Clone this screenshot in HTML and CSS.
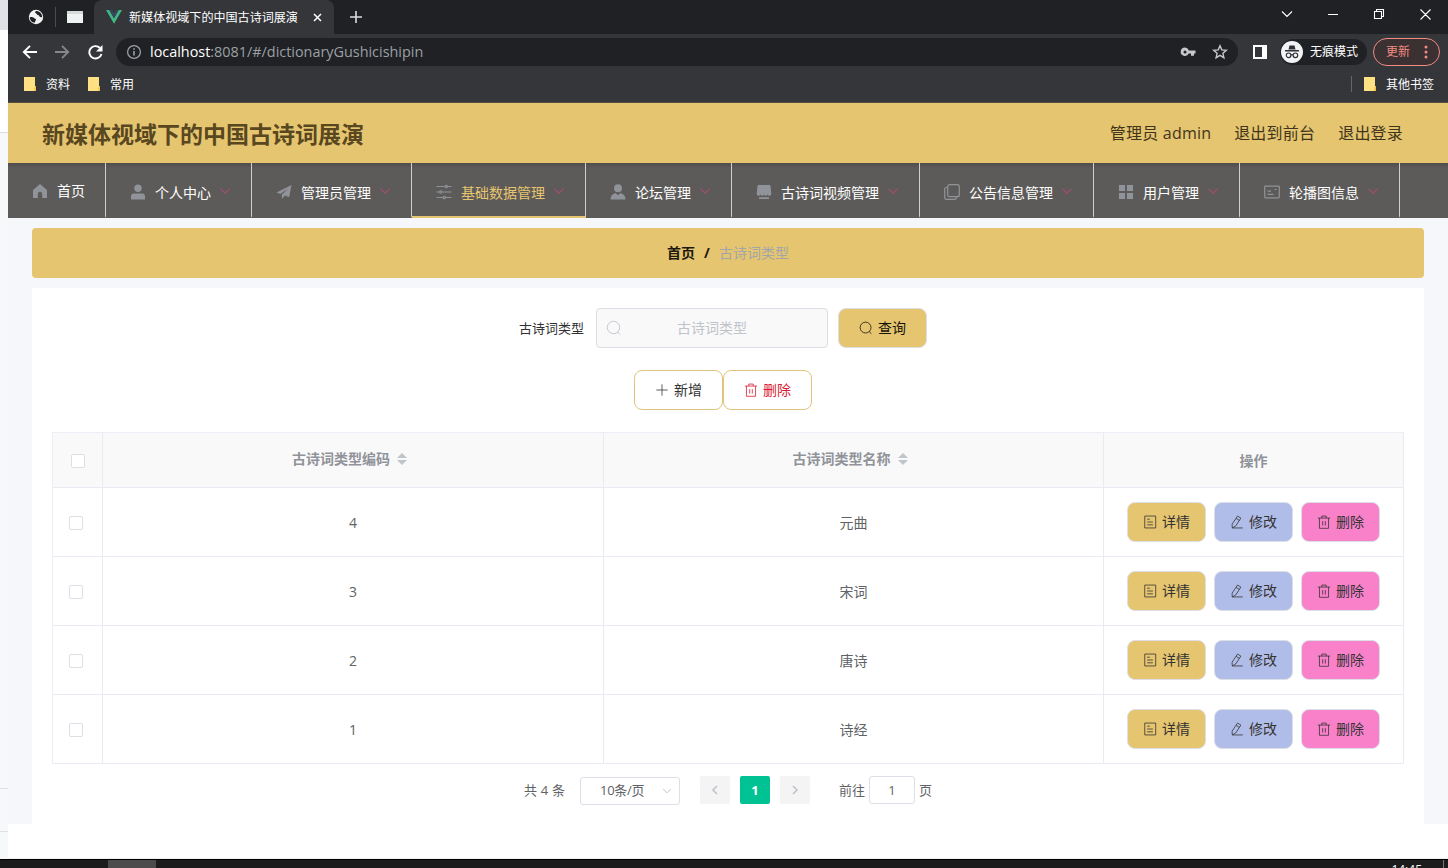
FILE: index.html
```html
<!DOCTYPE html>
<html lang="zh-CN">
<head>
<meta charset="utf-8">
<title>新媒体视域下的中国古诗词展演</title>
<link rel="stylesheet" href="styles.css">
</head>
<body>
<svg class="defs" width="0" height="0">
  <symbol id="search" viewBox="0 0 16 16"><circle cx="7.500" cy="7.500" r="6.200"/><path d="M11.600 12l2.600 2.600"/></symbol>
  <symbol id="plus" viewBox="0 0 16 16"><path d="M8 1.500v13M1.500 8h13"/></symbol>
  <symbol id="trash" viewBox="0 0 16 16"><path d="M1 3.500h14M2.800 3.500v11.700h10.400V3.500M5.500 3.500V1.200h5v2.300M6.500 7v5M9.500 7v5"/></symbol>
  <symbol id="doc" viewBox="0 0 16 16"><path d="M2 1.200h12.500v13.600H2zM4.800 4.800h3M4.800 8h6.500M4.800 11.200h6.500"/></symbol>
  <symbol id="edit" viewBox="0 0 16 16"><path d="M8.600 1.200l3.800 2.300-5.800 9-4 2.300-.2-4.300zM7 3.900l3.800 2.300M2.600 14.800h12"/></symbol>
  <symbol id="down" viewBox="0 0 12 12"><path d="M1.500 3.700L6 8.200l4.500-4.500"/></symbol>
  <symbol id="folder" viewBox="0 0 12 14"><path d="M0 0h11v9l1 .5V14H0z" fill="#ffe083"/><path d="M10 14l1-5 1 1v4z" fill="#f2c43d"/></symbol>
</svg>
<div class="screen">
  <div class="behind"><i class="b1"></i><i class="b2"></i><i class="b3"></i><i class="b4"></i><i class="b5"></i></div>
  <div class="window">
    <div class="tabs">
      <svg class="globe" viewBox="0 0 16 16"><circle cx="8" cy="8" r="7.200" fill="#f1f1f1"/><path d="M1.800 8.200c2-.4 3.400-.2 4.200.8s2 .6 2 1.600-1 1.200-1 2.900C4 13.700 1.800 11.200 1.800 8.200zM8 2c-1.300 1-.9 2 0 2.300s.6 1.700 2 1.700 1 1.800 2.200 2 1.300.6 2 .2C14.200 4.700 11.500 2 8 2z" fill="#202124"/></svg>
      <span class="tab-sep"></span>
      <span class="mini-page"></span>
      <div class="tab">
        <svg width="16" height="14" viewBox="0 0 16 14"><path d="M0 0h3.200L8 8.300 12.800 0H16L8 13.800z" fill="#41b883"/><path d="M3.200 0H6l2 3.500L10 0h2.800L8 8.300z" fill="#35495e"/></svg>
        <span class="tab-name">新媒体视域下的中国古诗词展演</span>
        <svg class="tab-x" width="9" height="9" viewBox="0 0 9 9"><path d="M1 1l7 7M8 1L1 8" stroke="#fff" stroke-width="1.500"/></svg>
      </div>
      <svg class="tab-add" width="12" height="12" viewBox="0 0 12 12"><path d="M6 0v12M0 6h12" stroke="#ddd" stroke-width="1.600"/></svg>
      <svg class="winbtns" width="152" height="14" viewBox="0 0 152 14" fill="none" stroke="#fff" stroke-width="1.100"><path d="M1 4.500l5 5 5-5M47 7.500h10M93.500 4.500h7v7h-7zM95.500 4.500v-2h7v7h-2M139.500 2.500l10 10M149.500 2.500l-10 10"/></svg>
    </div>
    <div class="toolbar">
      <svg class="navs" width="82" height="16" viewBox="0 0 82 16" fill="none" stroke-width="1.900"><path d="M15 8H2M8 1.800L1.800 8 8 14.200" stroke="#fff"/><path d="M33 8h13M40 1.800L46.200 8 40 14.200" stroke="#86878a"/><path d="M78 4A6.200 6.200 0 1 0 79.500 10" stroke="#fff"/><path d="M80.500 1v6.500H74z" fill="#fff"/></svg>
      <div class="address">
        <svg width="16" height="16" viewBox="0 0 16 16" fill="none" stroke="#9aa0a6" stroke-width="1.300"><circle cx="8" cy="8" r="6.400"/><path d="M8 7v4.500M8 4.200v1.500" stroke-width="1.600"/></svg>
        <span class="url"><b>localhost</b>:8081/#/dictionaryGushicishipin</span>
        <svg class="key" width="16" height="10" viewBox="0 0 16 10"><path fill-rule="evenodd" d="M5 .6a4.200 4.200 0 1 0 3.700 6H11v2.200h3V6.500h1.500V3.400H8.800A4.200 4.200 0 0 0 5 .6zM5 3.500a1.500 1.500 0 1 1 0 3 1.500 1.500 0 0 1 0-3z" fill="#c6c8cb"/></svg>
        <svg class="star" width="16" height="16" viewBox="0 0 16 16"><path d="M8 1.800l1.800 4.100 4.500.4-3.400 3 1 4.400L8 11.400l-3.900 2.300 1-4.400-3.400-3 4.500-.4z" fill="none" stroke="#c6c8cb" stroke-width="1.400"/></svg>
      </div>
      <svg class="side" width="14" height="14" viewBox="0 0 14 14"><path d="M0 0h14v14H0zM2 2v10h7V2z" fill-rule="evenodd" fill="#fff"/></svg>
      <div class="incog">
        <svg width="22" height="22" viewBox="0 0 22 22"><circle cx="11" cy="11" r="11" fill="#f1f3f4"/><path d="M7.500 8.500L8.500 4.500h5l1 4zM4 9h14v1.500H4z" fill="#303135"/><g fill="none" stroke="#303135" stroke-width="1.200"><circle cx="7.600" cy="14.300" r="2.300"/><circle cx="14.400" cy="14.300" r="2.300"/><path d="M9.800 14q1.200-.8 2.400 0"/></g></svg>
        <span>无痕模式</span>
      </div>
      <div class="update"><span>更新</span><svg width="4" height="14" viewBox="0 0 4 14" fill="#f28b82"><circle cx="2" cy="2" r="1.500"/><circle cx="2" cy="7" r="1.500"/><circle cx="2" cy="12" r="1.500"/></svg></div>
    </div>
    <div class="marks">
      <svg width="12" height="14"><use href="#folder"/></svg><span>资料</span>
      <svg width="12" height="14"><use href="#folder"/></svg><span>常用</span>
      <div class="others"><svg width="12" height="14"><use href="#folder"/></svg><span>其他书签</span></div>
    </div>
    <header class="head">
      <h1>新媒体视域下的中国古诗词展演</h1>
      <span>管理员 admin</span><span>退出到前台</span><span>退出登录</span>
    </header>
    <nav class="menu">
      <a class="home"><svg class="ico" viewBox="0 0 16 16"><path d="M8 1L1 7v8h4.800v-4a2.200 2.200 0 0 1 4.400 0v4H15V7z"/></svg>首页</a>
      <a><svg class="ico" viewBox="0 0 16 16"><circle cx="8" cy="4.300" r="3.700"/><path d="M1 15.500v-3A3 3 0 0 1 4 9.500h8a3 3 0 0 1 3 3v3z"/></svg>个人中心<svg class="arr"><use href="#down"/></svg></a>
      <a><svg class="ico" viewBox="0 0 16 16"><path d="M.5 8.500L15.500 1l-2.300 12.300-4.400-1.900-2.600 3.600-.5-4.300 6.800-6.500-8.200 5.700z"/></svg>管理员管理<svg class="arr"><use href="#down"/></svg></a>
      <a class="on"><svg class="ico line" viewBox="0 0 16 16"><path d="M.5 2.500h8M12 2.500h3.500M.5 8h2.500M6.500 8h9M.5 13.500h6M10 13.500h5.500"/><circle cx="10.300" cy="2.500" r="1.200"/><circle cx="4.800" cy="8" r="1.200"/><circle cx="8.300" cy="13.500" r="1.200"/></svg>基础数据管理<svg class="arr"><use href="#down"/></svg></a>
      <a><svg class="ico" viewBox="0 0 16 16"><circle cx="8" cy="4.300" r="4"/><path d="M.5 15.500c0-3.500 2-5.500 5-6.500L8 11.200 10.500 9c3 1 5 3 5 6.500z"/></svg>论坛管理<svg class="arr"><use href="#down"/></svg></a>
      <a><svg class="ico" viewBox="0 0 16 16"><path d="M2.500 1h11a1 1 0 0 1 1 1l.8 8a1.900 1.900 0 0 1-3.700.5 1.900 1.900 0 0 1-3.600 0 1.900 1.900 0 0 1-3.600 0A1.900 1.900 0 0 1 .7 10l.8-8a1 1 0 0 1 1-1zM3 13.200h10V15H3z"/></svg>古诗词视频管理<svg class="arr"><use href="#down"/></svg></a>
      <a><svg class="ico line" viewBox="0 0 16 16"><rect x="3.700" y=".7" width="11.600" height="12" rx="2"/><path d="M3.500 3.500H2.400A1.700 1.700 0 0 0 .7 5.200v8.400a1.700 1.700 0 0 0 1.700 1.700h8.300a1.700 1.700 0 0 0 1.700-1.700v-1"/></svg>公告信息管理<svg class="arr"><use href="#down"/></svg></a>
      <a><svg class="ico" viewBox="0 0 16 16"><path d="M1 1h6v6H1zM9 1h6v6H9zM1 9h6v6H1zM9 9h6v6H9z"/></svg>用户管理<svg class="arr"><use href="#down"/></svg></a>
      <a><svg class="ico line" viewBox="0 0 16 16"><rect x=".7" y="2.200" width="14.600" height="11.600" rx=".8"/><path d="M3.500 7.200h3.500M3.500 10.300h6M10.500 5.500h2"/></svg>轮播图信息<svg class="arr"><use href="#down"/></svg></a>
    </nav>
    <main class="main">
      <div class="crumb"><b>首页</b><b class="slash">/</b><span>古诗词类型</span></div>
      <section class="card">
        <div class="row">
          <label>古诗词类型</label>
          <div class="input"><svg class="gi" width="16" height="16"><use href="#search"/></svg><span>古诗词类型</span></div>
          <button class="btn query"><svg class="gi"><use href="#search"/></svg>查询</button>
        </div>
        <div class="row ops">
          <button class="btn ghost"><svg class="gi"><use href="#plus"/></svg>新增</button>
          <button class="btn ghost red"><svg class="gi"><use href="#trash"/></svg>删除</button>
        </div>
        <div class="table">
          <div class="th ck"><i class="box"></i></div>
          <div class="th sort">古诗词类型编码<i class="carets"></i></div>
          <div class="th sort">古诗词类型名称<i class="carets"></i></div>
          <div class="th">操作</div>

          <div class="td ck"><i class="box"></i></div><div class="td">4</div><div class="td">元曲</div>
          <div class="td acts"><button class="btn y"><svg class="gi"><use href="#doc"/></svg>详情</button><button class="btn b"><svg class="gi"><use href="#edit"/></svg>修改</button><button class="btn p"><svg class="gi"><use href="#trash"/></svg>删除</button></div>

          <div class="td ck"><i class="box"></i></div><div class="td">3</div><div class="td">宋词</div>
          <div class="td acts"><button class="btn y"><svg class="gi"><use href="#doc"/></svg>详情</button><button class="btn b"><svg class="gi"><use href="#edit"/></svg>修改</button><button class="btn p"><svg class="gi"><use href="#trash"/></svg>删除</button></div>

          <div class="td ck"><i class="box"></i></div><div class="td">2</div><div class="td">唐诗</div>
          <div class="td acts"><button class="btn y"><svg class="gi"><use href="#doc"/></svg>详情</button><button class="btn b"><svg class="gi"><use href="#edit"/></svg>修改</button><button class="btn p"><svg class="gi"><use href="#trash"/></svg>删除</button></div>

          <div class="td ck"><i class="box"></i></div><div class="td">1</div><div class="td">诗经</div>
          <div class="td acts"><button class="btn y"><svg class="gi"><use href="#doc"/></svg>详情</button><button class="btn b"><svg class="gi"><use href="#edit"/></svg>修改</button><button class="btn p"><svg class="gi"><use href="#trash"/></svg>删除</button></div>
        </div>
        <div class="pager">
          <span class="total">共 4 条</span>
          <div class="select"><span>10条/页</span><svg width="10" height="10" viewBox="0 0 12 12"><use href="#down"/></svg></div>
          <span class="pg"><svg width="10" height="12" viewBox="0 0 10 12"><path d="M7 2L3 6l4 4"/></svg></span>
          <span class="pg cur">1</span>
          <span class="pg"><svg width="10" height="12" viewBox="0 0 10 12"><path d="M3 2l4 4-4 4"/></svg></span>
          <span class="goto">前往</span><span class="num">1</span><span>页</span>
        </div>
      </section>
    </main>
    <div class="blank"></div>
  </div>
  <div class="taskbar"><i class="task"></i><span class="clock">14:45</span><i class="edge"></i></div>
</div>
</body>
</html>
```

FILE: styles.css
```css
* { box-sizing: border-box; }
body {
  margin: 0;
  width: 1448px;
  height: 868px;
  overflow: hidden;
  background: #fff;
  font: 14px/20px "Open Sans", "Noto Sans CJK SC", sans-serif;
  color: #606266;
}
.defs { position: absolute; }
svg { flex: none; }
span, a, button, label, h1 { white-space: nowrap; }
.screen {
  display: grid;
  grid-template-columns: 8px 1440px;
  grid-template-rows: 859px 9px;
  height: 868px;
  overflow: hidden;
}

/* window edge on the left */
.behind { display: flex; flex-direction: column; }
.b1 { height: 30px; background: #e0e2e7; }
.b2 { height: 103px; border-bottom: 1px solid #dcdee0; background: #fff; }
.b3 { height: 656px; border-bottom: 1px solid #e0e0e2; background: #f6f8fa; }
.b4 { height: 43px; border-bottom: 1px solid #e0e0e2; background: #f6f8fa; }
.b5 { flex: 1; background: #f6f9fa; }

.window { display: flex; flex-direction: column; }

/* browser chrome */
.tabs {
  height: 34px;
  display: flex;
  align-items: center;
  background: #202124;
  padding-left: 20px;
  color: #fff;
}
.globe { width: 16px; height: 16px; }
.tab-sep { width: 1px; height: 20px; margin-left: 11px; background: #4b4c50; }
.mini-page { width: 16px; height: 12px; margin-left: 11px; background: #eef2f0; border-top: 3px solid #d5dcd8; }
.tab {
  height: 34px;
  width: 240px;
  margin-left: 11px;
  padding-left: 12px;
  display: flex;
  align-items: center;
  background: #35363a;
  border-radius: 8px 8px 0 0;
}
.tab-name { margin-left: 7px; padding-top: 1px; font-size: 12.070px; width: 169px; }
.tab-x { margin-left: 15px; }
.tab-add { margin-left: 16px; }
.winbtns { margin: 0 15px 6px auto; }
.toolbar {
  height: 35px;
  display: flex;
  align-items: center;
  background: #35363a;
  padding-left: 14px;
}
.address {
  width: 1122px;
  height: 28px;
  margin-left: 12px;
  padding: 0 10px 0 10px;
  display: flex;
  align-items: center;
  border-radius: 14px;
  background: #202124;
}
.url { margin-left: 8px; font-size: 14.400px; color: #9aa0a6; }
.url b { font-weight: 400; color: #fff; }
.key { margin-left: auto; }
.star { margin-left: 16px; }
.side { margin-left: 15px; }
.incog {
  width: 87px;
  height: 26px;
  margin-left: 13px;
  padding-left: 1px;
  display: flex;
  align-items: center;
  border-radius: 13px;
  background: #202124;
  color: #fff;
  font-size: 12px;
}
.incog span { margin-left: 7px; padding-top: 1px; }
.update {
  width: 67px;
  height: 28px;
  margin-left: 6px;
  padding: 0 11px 0 12px;
  display: flex;
  align-items: center;
  justify-content: space-between;
  border: 1px solid #f28b82;
  border-radius: 14px;
  background: #3b3032;
  color: #f28b82;
  font-size: 12px;
}
.update span { padding-top: 1px; }
.marks {
  height: 34px;
  display: flex;
  align-items: center;
  padding: 0 14px 3px 16px;
  background: #35363a;
  border-bottom: 1px solid #55503f;
  color: #fff;
  font-size: 12px;
}
.marks span { margin: 0 18px 0 10px; padding-top: 1px; }
.others {
  height: 16px;
  margin-left: auto;
  padding-left: 12px;
  display: flex;
  align-items: center;
  border-left: 1px solid #66676a;
}
.others span { margin-right: 0; }

/* site header */
.head {
  height: 60px;
  display: flex;
  align-items: center;
  padding: 0 45px 0 34px;
  background: #e6c570;
  color: #40351c;
  font-size: 16px;
}
.head h1 { margin: 0 auto 0 0; font-size: 23px; line-height: 30px; padding-top: 1px; color: #59471f; }
.head span { margin-left: 23px; letter-spacing: .2px; }
.menu {
  height: 55px;
  display: flex;
  background: linear-gradient(#4f4d4b, #5d5b59 5px);
  color: #fff;
}
.menu a {
  display: flex;
  align-items: center;
  padding: 6px 20px 0 24px;
  border-right: 1px solid #d0cfce;
  border-bottom: 2px solid transparent;
}
.menu .home { padding: 3px 20px 0 24px; }
.menu .on { color: #e6c570; border-bottom-color: #e6c570; }
.ico { width: 16px; height: 16px; margin: -1px 9px 0 0; fill: #909399; }
.line { fill: none; stroke: #909399; stroke-width: 1.200; }
.arr { width: 12px; height: 12px; margin: -4px 0 0 8px; fill: none; stroke: #a34b73; stroke-width: 1.300; }

/* content */
.main { height: 606px; padding: 10px 24px 0; background: #f5f7fa; }
.crumb {
  height: 50px;
  display: flex;
  align-items: center;
  justify-content: center;
  margin-bottom: 10px;
  border-radius: 4px;
  background: #e6c570;
  color: #a3a6a8;
}
.crumb b { color: #1c180e; }
.crumb .slash { margin: 0 9px; }
.card { height: 536px; padding: 20px; background: #fff; }
.row { height: 40px; display: flex; justify-content: center; align-items: center; padding-right: 10px; }
.row label { margin-right: 12px; font-size: 13px; color: #303133; }
.input {
  width: 232px;
  height: 40px;
  margin-right: 10px;
  padding-left: 9px;
  display: flex;
  align-items: center;
  border: 1px solid #dcdfe6;
  border-radius: 4px;
  background: #f9f9f9;
  color: #bfc3cb;
}
.input span { margin-left: 55px; }
.ops { margin: 22px 0; }
.btn {
  height: 40px;
  width: 79px;
  padding: 0;
  display: flex;
  align-items: center;
  justify-content: center;
  gap: 5px;
  border: 1px solid #dcdfe6;
  border-radius: 8px;
  font: inherit;
  color: #333;
}
.gi { width: 14px; height: 14px; fill: none; stroke: currentColor; stroke-width: .9; }
.input .gi { width: 16px; height: 16px; }
.query { width: 89px; background: #e6c570; color: #15120a; }
.ghost { width: 89px; border-color: #dfc57b; background: #fff; }
.red { color: #d91b32; }
.y { background: #e6c570; }
.b { background: #b1bde9; }
.p { background: #f981ca; }
.table {
  display: grid;
  grid-template-columns: 50px 501px 500px 300px;
  grid-template-rows: 55px repeat(4, 69px);
  border: solid #ebeef5;
  border-width: 1px 0 0 1px;
}
.th, .td {
  display: flex;
  align-items: center;
  justify-content: center;
  border: solid #e8ebf1;
  border-width: 0 1px 1px 0;
}
.td { padding-top: 1px; }
.th { padding-top: 2px; background: #f9f9fa; color: #909399; font-weight: 700; }
.sort { padding: 0 7px 2px 0; }
.ck { padding-left: 1px; }
.td.ck { padding: 1px 3px 0 0; }
.acts { gap: 8px; padding-top: 0; }
.box { width: 14px; height: 14px; border: 1px solid #dcdfe6; border-radius: 2px; background: #fff; }
.carets { width: 10px; height: 12px; margin-left: 7px; display: flex; flex-direction: column; justify-content: space-between; }
.carets::before, .carets::after { content: ""; border: 5px solid transparent; }
.carets::before { border-top: 0; border-bottom-color: #c0c4cc; }
.carets::after { border-bottom: 0; border-top-color: #c0c4cc; }
.pager { display: flex; align-items: center; height: 28px; margin-top: 12px; padding-left: 472px; font-size: 13px; }
.total { width: 56px; letter-spacing: .2px; }
.select {
  width: 100px;
  height: 28px;
  margin: 2px 20px 0 0;
  padding: 0 7px 0 19px;
  display: flex;
  align-items: center;
  justify-content: space-between;
  border: 1px solid #dcdfe6;
  border-radius: 3px;
}
.select span { margin-top: -2px; letter-spacing: -.3px; }
.select svg { fill: none; stroke: #c0c4cc; stroke-width: 1.200; }
.pg {
  width: 30px;
  height: 28px;
  margin-right: 10px;
  display: flex;
  align-items: center;
  justify-content: center;
  border-radius: 2px;
  background: #f4f4f5;
}
.pg svg { fill: none; stroke: #c0c4cc; stroke-width: 1.700; }
.cur { background: #00c292; color: #fff; font-weight: 700; }
.goto { margin: 0 4px 0 19px; }
.num {
  width: 46px;
  height: 28px;
  margin-right: 4px;
  display: flex;
  align-items: center;
  justify-content: center;
  border: 1px solid #dcdfe6;
  border-radius: 3px;
}
.blank { flex: 1; background: #fff; border-bottom: 1px solid #eee; }

/* taskbar */
.taskbar { grid-column: 1 / 3; display: flex; overflow: hidden; background: #1c1c1c; border-top: 1px solid #000; color: #fff; font-size: 12px; }
.task { width: 48px; margin-left: 108px; background: #4c4c4c; }
.clock { margin-left: auto; height: 20px; }
.edge { width: 1px; margin: 0 4px 0 21px; background: #777; }
```
